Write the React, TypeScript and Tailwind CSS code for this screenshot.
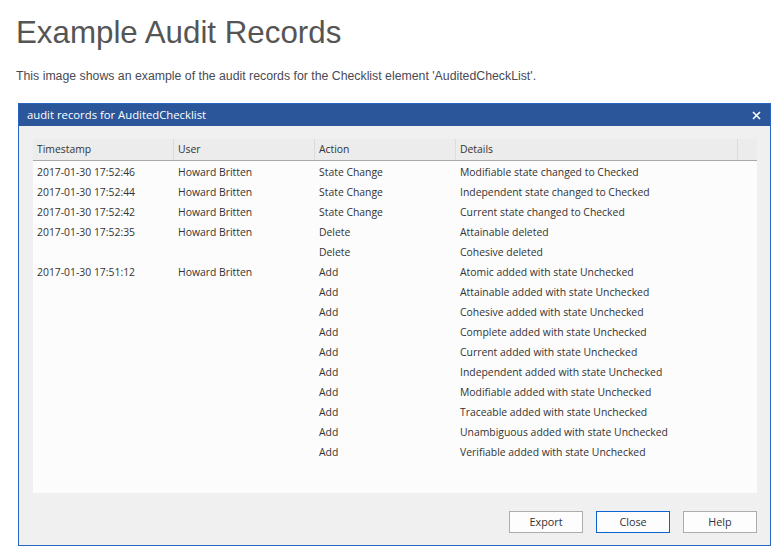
import React from 'react'

const rows: [string, string, string, string][] = [
  ['2017-01-30 17:52:46', 'Howard Britten', 'State Change', 'Modifiable state changed to Checked'],
  ['2017-01-30 17:52:44', 'Howard Britten', 'State Change', 'Independent state changed to Checked'],
  ['2017-01-30 17:52:42', 'Howard Britten', 'State Change', 'Current state changed to Checked'],
  ['2017-01-30 17:52:35', 'Howard Britten', 'Delete', 'Attainable deleted'],
  ['', '', 'Delete', 'Cohesive deleted'],
  ['2017-01-30 17:51:12', 'Howard Britten', 'Add', 'Atomic added with state Unchecked'],
  ['', '', 'Add', 'Attainable added with state Unchecked'],
  ['', '', 'Add', 'Cohesive added with state Unchecked'],
  ['', '', 'Add', 'Complete added with state Unchecked'],
  ['', '', 'Add', 'Current added with state Unchecked'],
  ['', '', 'Add', 'Independent added with state Unchecked'],
  ['', '', 'Add', 'Modifiable added with state Unchecked'],
  ['', '', 'Add', 'Traceable added with state Unchecked'],
  ['', '', 'Add', 'Unambiguous added with state Unchecked'],
  ['', '', 'Add', 'Verifiable added with state Unchecked'],
]

const cols = ['Timestamp', 'User', 'Action', 'Details']

export default function App() {
  return (
    <div className="w-[781px] h-[556px] bg-white overflow-hidden" style={{ fontFamily: '"Liberation Sans", Arial, sans-serif' }}>
      <h1 className="pl-[16px] pt-[14px] text-[31.3px] leading-[38px] text-[#555555]">Example Audit Records</h1>
      <p className="pl-[16px] mt-[16px] text-[12.3px] leading-[16px] text-[#4a4a55]">
        This image shows an example of the audit records for the Checklist element 'AuditedCheckList'.
      </p>

      {/* dialog */}
      <div
        className="ml-[18px] mt-[19px] w-[753px] h-[443px] border border-[#2b64c0] bg-[#f0f0f0] flex flex-col"
        style={{ fontFamily: '"Open Sans", "Noto Sans", sans-serif' }}
      >
        <div className="h-[22px] bg-[#2b579a] flex items-center justify-between pl-[8px] pr-[9px] text-white text-[11.3px]">
          <span className="pt-[1px]">audit records for AuditedChecklist</span>
          <svg width="9" height="9" viewBox="0 0 9 9">
            <path d="M1 1 L8 8 M8 1 L1 8" stroke="white" strokeWidth="1.6" />
          </svg>
        </div>

        <div className="ml-[14px] mt-[13px] w-[724px] h-[354px] bg-[#fcfcfc] text-[10.4px] text-[#333333]">
          <div className="flex h-[22px] bg-[#ececec] border-b border-[#a9a9a9]">
            {cols.map((c, i) => (
              <div
                key={c}
                className={`${i === 3 ? 'w-[282px]' : 'w-[141px]'} flex items-center pl-[4px] pt-[1px] border-r border-[#dcdcdc]`}
              >
                {c}
              </div>
            ))}
            <div className="flex-1" />
          </div>
          <div className="pt-[2px]">
            {rows.map((r, i) => (
              <div key={i} className="flex h-[20px] items-center">
                <div className="w-[141px] pl-[4px]">{r[0]}</div>
                <div className="w-[141px] pl-[4px]">{r[1]}</div>
                <div className="w-[141px] pl-[4px]">{r[2]}</div>
                <div className="pl-[4px]">{r[3]}</div>
              </div>
            ))}
          </div>
        </div>

        <div className="flex justify-end gap-[13px] mr-[13px] mt-[18px] text-[10.8px] text-[#333333]">
          <button className="w-[74px] h-[22px] border border-[#adadad] bg-[#fdfdfd] pt-[1px]">Export</button>
          <button className="w-[74px] h-[22px] border border-[#0a64d2] bg-[#fdfdfd] pt-[1px]">Close</button>
          <button className="w-[74px] h-[22px] border border-[#adadad] bg-[#fdfdfd] pt-[1px]">Help</button>
        </div>
      </div>
    </div>
  )
}
